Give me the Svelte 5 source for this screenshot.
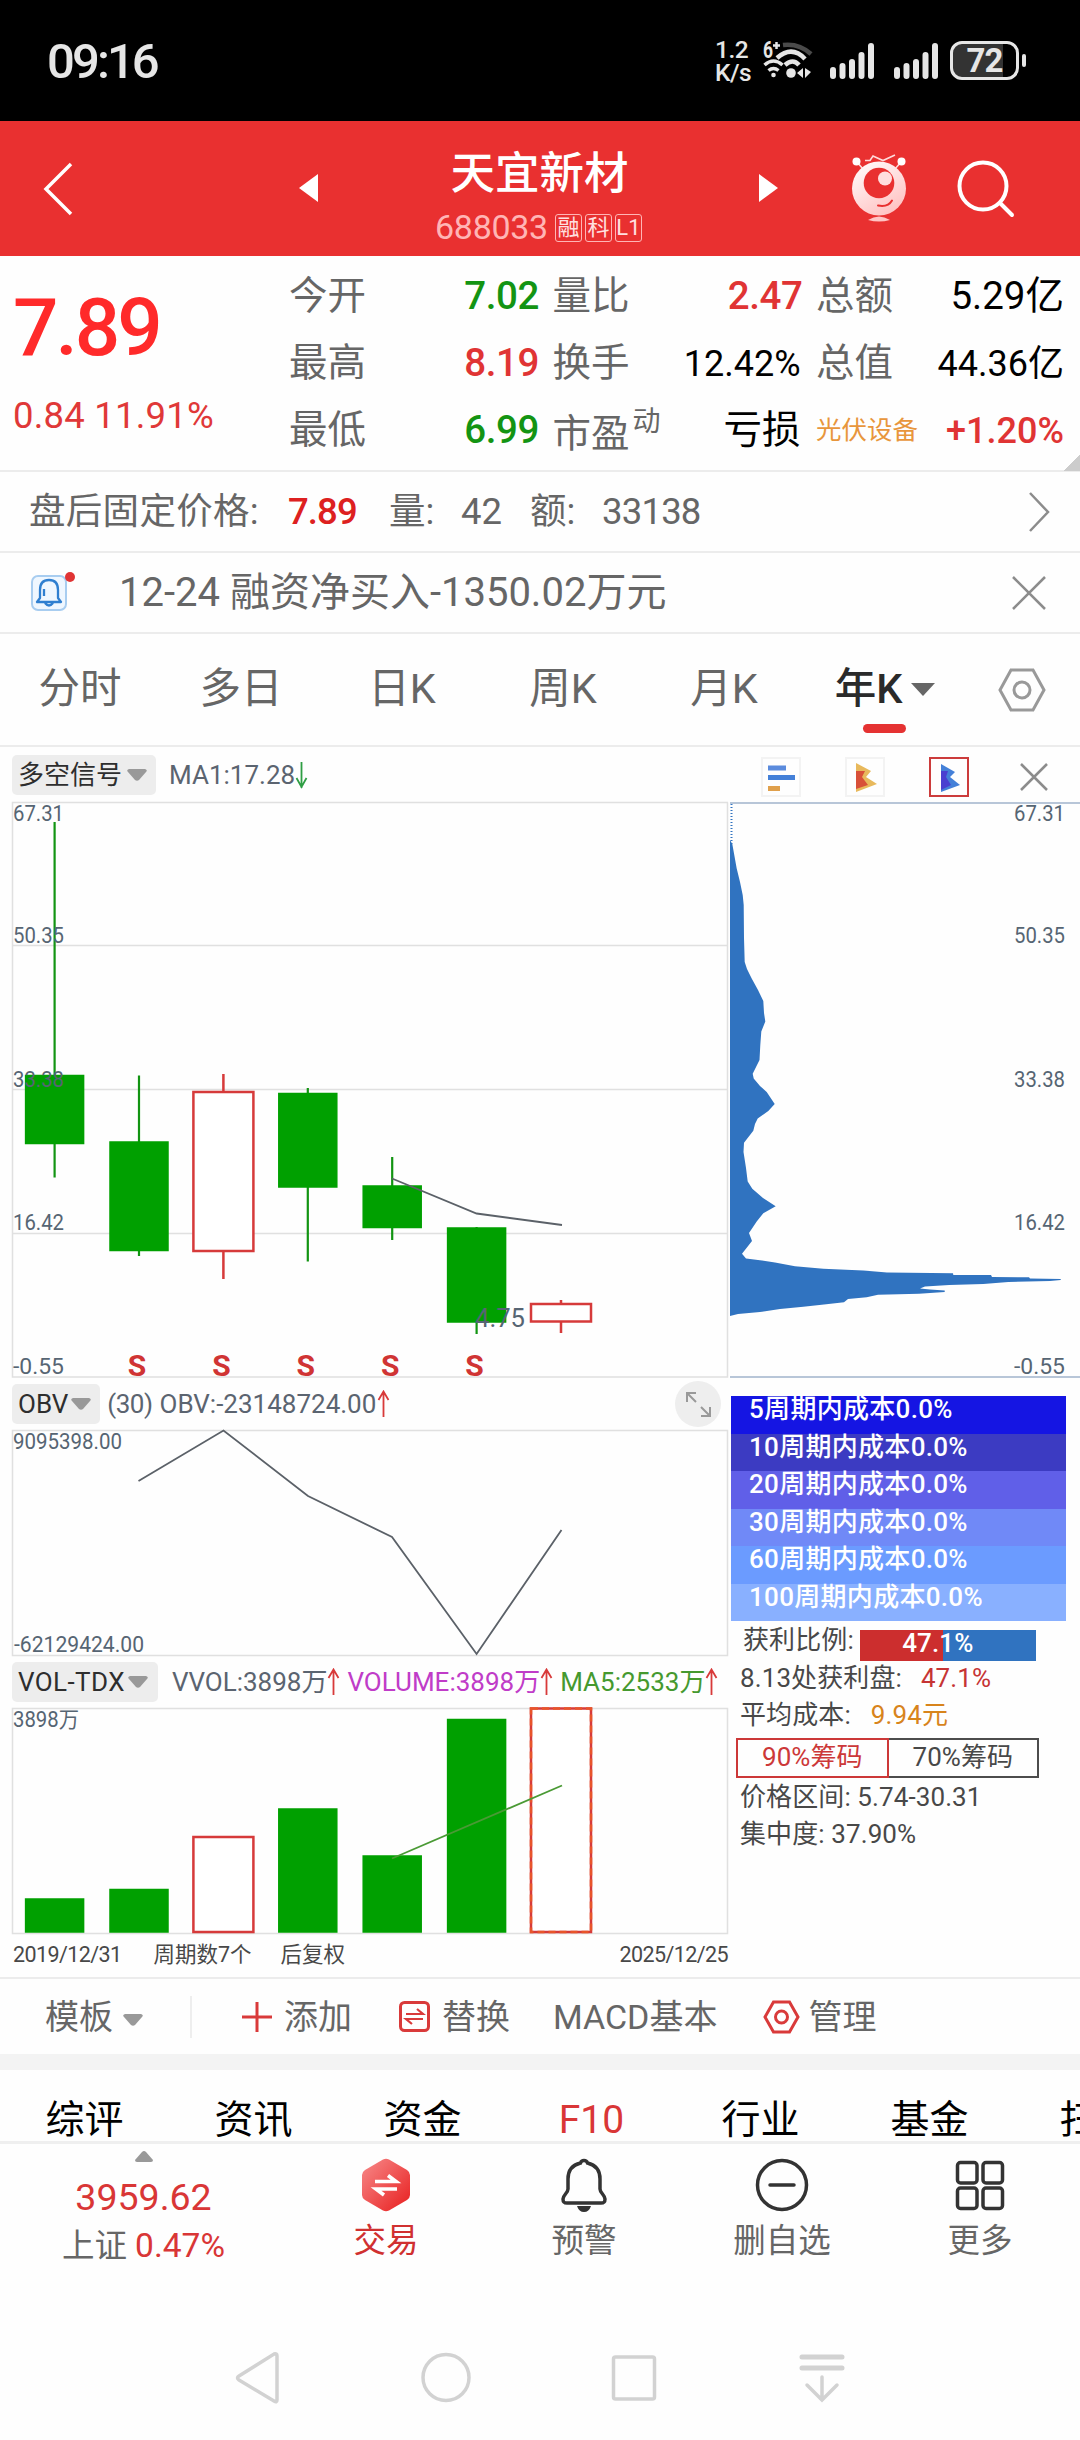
<script lang="ts">
  type Tone = "up" | "down" | "flat";

  const stats: { label: string; sup?: string; value: string; tone: Tone; small?: boolean; sector?: boolean }[][] = [
    [
      { label: "今开", value: "7.02", tone: "down" },
      { label: "最高", value: "8.19", tone: "up" },
      { label: "最低", value: "6.99", tone: "down" },
    ],
    [
      { label: "量比", value: "2.47", tone: "up" },
      { label: "换手", value: "12.42%", tone: "flat", small: true },
      { label: "市盈", sup: "动", value: "亏损", tone: "flat" },
    ],
    [
      { label: "总额", value: "5.29亿", tone: "flat" },
      { label: "总值", value: "44.36亿", tone: "flat", small: true },
      { label: "光伏设备", value: "+1.20%", tone: "up", small: true, sector: true },
    ],
  ];

  const periods = ["分时", "多日", "日K", "周K", "月K", "年K"];
  let period = $state("年K");

  // one slot per year, shared by the three charts
  const slot = (i: number) => 54.6 + i * 84.4;

  const candles = [
    { high: 822, top: 1075.5, bottom: 1143.5, low: 1177.5, up: false },
    { high: 1075.5, top: 1142, bottom: 1250.5, low: 1256, up: false },
    { high: 1074, top: 1092, bottom: 1251, low: 1279, up: true },
    { high: 1088, top: 1093.5, bottom: 1187, low: 1261.5, up: false },
    { high: 1157, top: 1186, bottom: 1227.5, low: 1240, up: false },
    { high: 1227, top: 1228, bottom: 1322, low: 1334, up: false },
    { high: 1300, top: 1304, bottom: 1321.5, low: 1333, up: true },
  ];
  const scale = [
    { text: "67.31", y: 821 },
    { text: "50.35", y: 942.5 },
    { text: "33.38", y: 1086.5 },
    { text: "16.42", y: 1230 },
    { text: "-0.55", y: 1373.5 },
  ];
  const volumes = [
    { y: 1899, up: false },
    { y: 1889.5, up: false },
    { y: 1837, up: true },
    { y: 1809, up: false },
    { y: 1856, up: false },
    { y: 1719.5, up: false },
    { y: 1708.5, up: true },
  ];

  const chips =
    "730,840 732.3,844 736.7,868.4 740,882 742.7,895 743.7,905 744,938 744.7,962 747,969 751.7,978.6 758,990 763.3,1001 764,1013 765.3,1021.4 761.3,1031.6 760.3,1045 759.5,1060 752.7,1073.7 753.7,1078.6 760,1086 766.7,1092 774.7,1104 768.3,1111 757.7,1118.6 755,1124 753.3,1130.8 744,1142.7 743.5,1152 746,1168 747.7,1181.4 752.3,1188.8 763,1198 775.7,1206.3 763.3,1213.3 756.7,1221.4 749,1233 752,1241 742,1253.7 746,1258.6 760,1260.2 775,1262.5 795,1266.3 823.3,1268.8 863.3,1270.4 887,1272.4 953,1273.3 953.3,1275 991,1275 992,1277 1029,1277.3 1030,1278.5 1060.7,1279 1060.7,1280 1050,1281 1008.3,1282 983.3,1284 949.3,1285 925,1286.5 920,1288.5 930,1289.5 944.7,1290.5 944.7,1292 919,1293.7 878,1294.8 866.7,1297.3 848,1299 844,1302.2 824,1304.5 803.3,1306.7 780,1309 760,1312 738,1314 730,1316";

  const costs = [
    { text: "5周期内成本0.0%", color: "#1515e3" },
    { text: "10周期内成本0.0%", color: "#3c3bc2" },
    { text: "20周期内成本0.0%", color: "#605fe8" },
    { text: "30周期内成本0.0%", color: "#7089f7" },
    { text: "60周期内成本0.0%", color: "#6b9bff" },
    { text: "100周期内成本0.0%", color: "#89b0ff" },
  ];

  const infoTabs = ["综评", "资讯", "资金", "F10", "行业", "基金", "扫雷"];
</script>

{#snippet trend(up: boolean)}
  <svg class="trend" class:up width="13" height="28" viewBox="0 0 13 28">
    {#if up}
      <path d="M6.5 27V1M1.5 10l5-8.500 5 8.500" />
    {:else}
      <path d="M6.500 1v26M1.500 17l5 9 5-9" />
    {/if}
  </svg>
{/snippet}

{#snippet caret()}
  <svg class="caret" width="20" height="12" viewBox="0 0 20 12"><path d="M2 0h16q3 1 1 3l-7 8q-2 1.500-4 0L1 3Q-1 1 2 0z" /></svg>
{/snippet}

{#snippet signal()}
  <svg class="signal" width="44" height="36" viewBox="0 0 44 36">
    <path d="M3 27v6M12.500 23v10M22 19v14M31.500 12v21M41 3v30" />
  </svg>
{/snippet}

<div class="screen">
  <div class="status">
    <span class="clock">09:16</span>
    <div class="speed"><span>1.2</span><span>K/s</span></div>
    <svg class="wifi" width="52" height="40" viewBox="0 0 52 40">
      <text x="0" y="18" textLength="10" lengthAdjust="spacingAndGlyphs">6</text>
      <path class="thin" d="M10 5.500h7M13.500 2v7" />
      <path class="off" d="M20 5q16-2 28 9" />
      <path d="M14 18q15-13 28 1" />
      <path d="M22 25q8-7 14 0" />
      <path class="mid" d="M1.500 25q9-8 18 0M5.500 30.500q5-4 10 0" />
      <circle cx="10.500" cy="35" r="2.300" />
      <circle cx="28" cy="33" r="4.800" />
      <path class="fill" d="M34 33l6-5v10zM42 28v10l6-6z" />
    </svg>
    {@render signal()}
    {@render signal()}
    <div class="battery"><span>72</span></div>
    <i class="battery-tip"></i>
  </div>

  <header>
    <svg class="back" width="32" height="56" viewBox="0 0 32 56"><path d="M29 3L4 28l25 25" /></svg>
    <svg class="prev" width="19" height="28" viewBox="0 0 19 28"><path d="M19 0v28L0 14z" /></svg>
    <div class="title">
      <h1>天宜新材</h1>
      <div class="code">
        <span>688033</span>
        <b>融</b><b>科</b><b>L1</b>
      </div>
    </div>
    <svg class="next" width="19" height="28" viewBox="0 0 19 28"><path d="M0 0v28l19-14z" /></svg>
    <svg class="mascot" width="56" height="70" viewBox="0 0 56 70">
      <defs>
        <linearGradient id="face" x1="0" y1="0" x2="0.600" y2="1">
          <stop offset="0" stop-color="#fff" />
          <stop offset="1" stop-color="#ffc4c4" />
        </linearGradient>
      </defs>
      <path class="wire" d="M6 9l6 7M50 9l-6 7M14 7.500h5l3-4.500 10 4.500L44 2" />
      <circle cx="5.500" cy="8.500" r="4" fill="#fff" />
      <circle cx="50.500" cy="8.500" r="4" fill="#fff" />
      <circle cx="28" cy="35.500" r="27" fill="url(#face)" />
      <circle cx="28" cy="30" r="15.300" fill="#e93030" />
      <circle cx="34" cy="25.500" r="7" fill="#ffdede" />
      <path class="smile" d="M27 52.500q10 2 14-5" />
      <path d="M17 67q11-7 22 0-11 3-22 0z" fill="#ffc4c4" />
    </svg>
    <svg class="search" width="58" height="58" viewBox="0 0 58 58">
      <circle cx="26" cy="26" r="23.500" />
      <path d="M43 43l12 12" />
    </svg>
  </header>

  <section class="quote">
    <div class="last">
      <strong>7.89</strong>
      <span>0.84 11.91%</span>
    </div>
    {#each stats as column}
      <dl>
        {#each column as item}
          <div>
            <dt class:sector={item.sector}>{item.label}{#if item.sup}<sup>{item.sup}</sup>{/if}</dt>
            <dd class={item.tone} class:small={item.small}>{item.value}</dd>
          </div>
        {/each}
      </dl>
    {/each}
    <i class="fold"></i>
  </section>

  <div class="after">
    <span>盘后固定价格:</span>
    <span class="price">7.89</span>
    <span>量:</span>
    <span class="lots">42</span>
    <span>额:</span>
    <span class="amount">33138</span>
    <svg width="24" height="42" viewBox="0 0 24 42"><path d="M3 2l18 19L3 40" /></svg>
  </div>

  <div class="notice">
    <svg width="46" height="42" viewBox="0 0 46 42">
      <rect x="1" y="7" width="34" height="34" rx="6" fill="#eff7ff" stroke="#a8cdf0" stroke-width="2" />
      <path d="M18 11c-6 0-9 4-9 10v8l-3 4h24l-3-4v-8c0-6-3-10-9-10zM14 34q4 5 8 0M13 20v7" fill="none" stroke="#2f7fd0" stroke-width="2.300" stroke-linejoin="round" />
      <circle cx="39" cy="8" r="5" fill="#e03434" />
    </svg>
    <p>12-24 融资净买入-1350.02万元</p>
    <svg class="close" width="36" height="36" viewBox="0 0 36 36"><path d="M2 2l32 32M34 2L2 34" /></svg>
  </div>

  <nav class="periods">
    {#each periods as name}
      <button class:active={period === name} onclick={() => (period = name)}>
        {name}{#if name === "年K"}<svg width="24" height="13" viewBox="0 0 24 13"><path d="M0 0h24L12 13z" /></svg>{/if}
      </button>
    {/each}
    <svg class="hex" width="50" height="44" viewBox="0 0 50 44">
      <path d="M14 2h22l11 20-11 20H14L3 22z" />
      <circle cx="25" cy="22" r="8" />
    </svg>
  </nav>

  <div class="indicator main">
    <span class="pick">多空信号{@render caret()}</span>
    <span class="ma">MA1:17.28</span>{@render trend(false)}
    <div class="tools">
      <svg width="40" height="40" viewBox="0 0 40 40">
        <path d="M7 8.500h18v5H7z" fill="#5b8bdd" /><path d="M7 18h27v5H7z" fill="#4480d8" /><path d="M7 29h12v5H7z" fill="#e0a04c" />
      </svg>
      <svg width="40" height="40" viewBox="0 0 40 40">
        <path d="M11 6l15 8-5 6 11 7-21 8z" fill="#e8b95c" /><path d="M11 14h9l-3 6 6 8-12 4z" fill="#d85038" />
      </svg>
      <svg class="on" width="40" height="40" viewBox="0 0 40 40">
        <path d="M12 7l14 8-5 5 10 8-19 7z" fill="#4480d8" /><path d="M12 14h7l-2 6 5 8-10 5z" fill="#4a3fd0" />
      </svg>
    </div>
    <svg class="close" width="30" height="30" viewBox="0 0 30 30"><path d="M2 2l26 26M28 2L2 28" /></svg>
  </div>

  <div class="charts">
    <div class="left">
      <svg class="plot" width="728" height="576" viewBox="0 802 728 576">
        <path class="frame" d="M728 802.500H12.500v574.500H727.500V802.500M12 945.500h716M12 1089.500h716M12 1233.500h716" />
        {#each candles as c, i}
          <path class={c.up ? "rise" : "fall"} d="M{slot(i)} {c.high}V{c.top}M{slot(i)} {c.bottom}V{c.low}" />
          <rect class={c.up ? "rise" : "fall solid"} x={slot(i) - (c.up ? 30 : 29)} y={c.top} width={c.up ? 60 : 58} height={c.bottom - c.top} />
        {/each}
        {#each scale as s}
          <text x="13" y={s.y} textLength="51" lengthAdjust="spacingAndGlyphs">{s.text}</text>
        {/each}
        <path class="line" d="M392 1178.500L476.600 1213.500 562 1225" />
        <text class="low" x="475" y="1327" textLength="50" lengthAdjust="spacingAndGlyphs">4.75</text>
        {#each [1, 2, 3, 4, 5] as i}
          <text class="sell" x={slot(i) - 2} y="1375.500">S</text>
        {/each}
      </svg>

      <div class="indicator">
        <span class="pick">OBV{@render caret()}</span>
        <span class="args">(30)</span>
        <span class="obv">OBV:-23148724.00</span>{@render trend(true)}
        <svg class="expand" width="46" height="46" viewBox="0 0 46 46">
          <circle cx="23" cy="23" r="23" />
          <path d="M12 21v-9h9M12 12l9 9M35 26v9h-9M35 35l-9-9" />
        </svg>
      </div>
      <svg class="plot" width="728" height="226" viewBox="0 1430 728 226">
        <path class="frame" d="M12.500 1430.500H727.500V1655.500H12.500z" />
        <text x="13" y="1449" textLength="109" lengthAdjust="spacingAndGlyphs">9095398.00</text>
        <text x="14" y="1652" textLength="130" lengthAdjust="spacingAndGlyphs">-62129424.00</text>
        <path class="line" d="M138.500 1481L223.500 1430.500 308 1496 392 1537 476.600 1654 561.500 1530" />
      </svg>

      <div class="indicator">
        <span class="pick vol">VOL-TDX{@render caret()}</span>
        <span class="vvol">VVOL:3898万</span>{@render trend(true)}
        <span class="volume">VOLUME:3898万</span>{@render trend(true)}
        <span class="ma5">MA5:2533万</span>{@render trend(true)}
      </div>
      <svg class="plot" width="728" height="226" viewBox="0 1708 728 226">
        <path class="frame" d="M12.500 1708.500H727.500V1933.500H12.500z" />
        {#each volumes as v, i}
          <rect class={v.up ? "rise" : "fall solid"} x={slot(i) - (v.up ? 30 : 29)} y={v.y} width={v.up ? 60 : 58} height={1932 - v.y} />
        {/each}
        <rect class="live" x={slot(6) - 30} y="1708.500" width="60" height="223.500" />
        <path class="line avg" d="M392 1858.500L562 1785.500" />
        <text x="13" y="1727" textLength="66" lengthAdjust="spacingAndGlyphs">3898万</text>
      </svg>
      <div class="dates">
        <span class="day">2019/12/31</span>
        <span>周期数7个</span>
        <span>后复权</span>
        <span class="day">2025/12/25</span>
      </div>
    </div>

    <div class="right">
      <svg class="plot" width="352" height="576" viewBox="728 802 352 576">
        <path class="edge" d="M730 803H1080M730 1377H1080" />
        <path class="dots" d="M731.500 804v40" />
        <polygon points={chips} />
        {#each scale as s}
          <text x="1014" y={s.y} textLength="51" lengthAdjust="spacingAndGlyphs">{s.text}</text>
        {/each}
      </svg>
      <ul>
        {#each costs as c}
          <li style:background={c.color}>{c.text}</li>
        {/each}
      </ul>
      <p class="ratio">获利比例:<span>47.1%</span></p>
      <p>8.13处获利盘:<em>47.1%</em></p>
      <p>平均成本:<em class="avg">9.94元</em></p>
      <div class="range"><span class="on">90%筹码</span><span>70%筹码</span></div>
      <p>价格区间: 5.74-30.31</p>
      <p>集中度: 37.90%</p>
    </div>
  </div>

  <div class="toolbar">
    <span class="tpl">模板{@render caret()}</span>
    <span class="add">
      <svg width="30" height="30" viewBox="0 0 30 30"><path d="M15 0v30M0 15h30" /></svg>添加
    </span>
    <span class="swap">
      <svg width="31" height="31" viewBox="0 0 31 31">
        <rect x="1.500" y="1.500" width="28" height="28" rx="4" />
        <path d="M7 13h17l-6-5M24 18H7l6 5" />
      </svg>替换
    </span>
    <span class="macd">MACD基本</span>
    <span class="manage">
      <svg width="37" height="34" viewBox="0 0 37 34"><path d="M10.500 2h16l8.500 15-8.500 15h-16L2 17z" /><circle cx="18.500" cy="17" r="6" /></svg>管理
    </span>
  </div>

  <nav class="info">
    {#each infoTabs as name}
      <span class:hot={name === "F10"}>{name}</span>
    {/each}
  </nav>

  <footer>
    <div class="index">
      <svg width="18" height="11" viewBox="0 0 18 11"><path d="M9 0q1 0 2 1l7 8q0 2-2 2H2q-2 0-2-2l7-8q1-1 2-1z" /></svg>
      <strong>3959.62</strong>
      <span>上证 <b>0.47%</b></span>
    </div>
    <div class="act trade">
      <svg width="54" height="54" viewBox="0 0 54 54">
        <defs>
          <linearGradient id="hexfill" x1="0" y1="0" x2="1" y2="1">
            <stop offset="0" stop-color="#f78a8a" />
            <stop offset="1" stop-color="#e81e1e" />
          </linearGradient>
        </defs>
        <path d="M24 1.500q3-1.500 6 0l18 10.500q3 2 3 5v20q0 3-3 5L30 52.500q-3 1.500-6 0L6 42q-3-2-3-5V17q0-3 3-5z" fill="url(#hexfill)" />
        <path d="M16 23.500h21l-8-6M38 31H17l8 6" fill="none" stroke="#fff" stroke-width="3.600" />
      </svg>
      <span>交易</span>
    </div>
    <div class="act">
      <svg width="54" height="54" viewBox="0 0 54 54">
        <path d="M27 2.500c-2 0-3 1-3.500 2.500C15 7 11 13 11 21v10c0 4-5 6-5 10 0 3 1 4 4 4h34c3 0 4-1 4-4 0-4-5-6-5-10V21c0-8-4-14-12.500-16-.500-1.500-1.500-2.500-3.500-2.500z" />
        <path class="fill" d="M20 48h14q-2 6-7 6t-7-6z" />
      </svg>
      <span>预警</span>
    </div>
    <div class="act">
      <svg width="54" height="54" viewBox="0 0 54 54"><circle cx="27" cy="27" r="24.500" /><path d="M15 27h24" stroke-linecap="round" /></svg>
      <span>删自选</span>
    </div>
    <div class="act">
      <svg width="54" height="54" viewBox="0 0 54 54">
        <rect x="4.500" y="4.500" width="19.500" height="20.500" rx="3" /><rect x="30" y="4.500" width="19.500" height="20.500" rx="3" />
        <rect x="4.500" y="30" width="19.500" height="20.500" rx="3" /><rect x="30" y="30" width="19.500" height="20.500" rx="3" />
      </svg>
      <span>更多</span>
    </div>
  </footer>

  <div class="system">
    <svg width="50" height="54" viewBox="0 0 50 54"><path d="M44 5v44q0 3-3 1L6 29q-3-2 0-4L41 3q3-1 3 2z" /></svg>
    <svg width="50" height="54" viewBox="0 0 50 54"><circle cx="25" cy="26.500" r="23" /></svg>
    <svg width="50" height="54" viewBox="0 0 50 54"><rect x="4.500" y="6" width="41" height="42" rx="2" /></svg>
    <svg width="50" height="54" viewBox="0 0 50 54"><path class="bars" d="M5 6h40M5 17h40" /><path d="M25 26v23M10 34l15 15 15-15" /></svg>
  </div>
</div>

<style>
  :global(body) {
    background: #fefefe;
  }
  .screen {
    width: 1080px;
    height: 2440px;
    overflow: hidden;
    background: #fefefe;
    color: #666;
    font-family: Roboto, "Noto Sans CJK SC", sans-serif;
    line-height: 1;
    white-space: nowrap;
  }
  .screen * {
    box-sizing: border-box;
  }
  svg {
    display: block;
    flex: none;
  }
  p,
  h1,
  ul,
  dl,
  dd {
    margin: 0;
    padding: 0;
  }

  /* status bar */
  .status {
    display: flex;
    height: 121px;
    padding-left: 47px;
    background: #000;
    color: #e6e6e6;
  }
  .clock {
    width: 668px;
    padding-top: 37px;
    font-size: 49px;
    font-weight: 500;
    letter-spacing: -2.9px;
  }
  .speed {
    width: 48px;
    padding-top: 39px;
    font-size: 24.5px;
    line-height: 22.5px;
  }
  .speed span {
    display: block;
    font-weight: 500;
    letter-spacing: -0.5px;
  }
  .wifi {
    margin: 40px 15px 0 0;
    overflow: visible;
    fill: #e6e6e6;
  }
  .wifi text {
    font-size: 23px;
    font-weight: 700;
  }
  .wifi path {
    fill: none;
    stroke: #e6e6e6;
    stroke-width: 4.5;
  }
  .wifi .thin {
    stroke-width: 2.5;
  }
  .wifi .mid {
    stroke-width: 3.5;
  }
  .wifi .off {
    stroke: #4a4a4a;
  }
  .wifi .fill {
    fill: #e6e6e6;
    stroke: none;
  }
  .signal {
    margin: 43px 20px 0 0;
    fill: none;
    stroke: #e6e6e6;
    stroke-width: 6;
    stroke-linecap: round;
  }
  .battery {
    width: 69px;
    height: 39px;
    margin: 41px 3px 0 -8px;
    border: 3px solid #e6e6e6;
    border-radius: 12px;
    background: linear-gradient(90deg, #333 80%, #000 80%);
    font-size: 33px;
    font-weight: 700;
    line-height: 34px;
    text-align: center;
    letter-spacing: -1px;
  }
  .battery-tip {
    width: 4px;
    height: 13px;
    margin-top: 54px;
    border-radius: 2px;
    background: #e6e6e6;
  }

  /* header */
  header {
    display: flex;
    height: 135px;
    background: #e93030;
    color: #fff;
  }
  .back,
  .search {
    fill: none;
    stroke: #fff;
    stroke-width: 3.5;
  }
  .back {
    margin: 40px 0 0 42px;
  }
  .prev,
  .next {
    margin-top: 53px;
    fill: #fff;
  }
  .prev {
    margin-left: 225px;
  }
  .title {
    width: 441px;
    text-align: center;
  }
  h1 {
    margin-top: 28px;
    padding-left: 2px;
    font-size: 44.5px;
    font-weight: 500;
    line-height: 50px;
  }
  .code {
    display: flex;
    justify-content: center;
    margin-top: 12px;
    gap: 3px;
    font-size: 34px;
    line-height: 32px;
    color: #ffb5b5;
  }
  .code span {
    margin-right: 4px;
    letter-spacing: -0.3px;
  }
  .code b {
    width: 27px;
    height: 28px;
    margin-top: 3px;
    border: 1.5px solid #ffb5b5;
    border-radius: 3px;
    color: #ffe0e0;
    font-size: 22px;
    font-weight: 400;
    line-height: 25px;
    display: flex;
    justify-content: center;
  }
  .mascot {
    margin: 32px 0 0 73px;
  }
  .wire {
    fill: none;
    stroke: #ffdada;
    stroke-width: 1.6;
  }
  .smile {
    fill: none;
    stroke: #e93030;
    stroke-width: 2;
    stroke-linecap: round;
  }
  .search {
    margin: 39px 0 0 50px;
    stroke-width: 4;
    stroke-linecap: round;
  }

  /* quote */
  .quote {
    position: relative;
    display: flex;
    height: 216px;
    border-bottom: 2px solid #ececec;
  }
  .last {
    width: 289px;
    padding-left: 13px;
    color: #e03838;
  }
  .last strong {
    display: block;
    margin-top: 32px;
    color: #ff2a2a;
    font-size: 80px;
    font-weight: 500;
    line-height: 80px;
    letter-spacing: -3px;
  }
  .last span {
    display: block;
    margin-top: 28px;
    font-size: 36.5px;
    line-height: 40px;
    letter-spacing: 0.2px;
  }
  dl {
    width: 248px;
    margin-right: 15.5px;
    padding-top: 7px;
  }
  dl div {
    display: flex;
    align-items: center;
    justify-content: space-between;
    height: 67px;
  }
  dt {
    font-size: 38.5px;
  }
  dt sup {
    display: inline-block;
    margin-left: 3px;
    font-size: 28px;
    line-height: 1;
    vertical-align: 16px;
  }
  dt.sector {
    color: #e8963c;
    font-size: 25.5px;
  }
  dd {
    font-size: 38.5px;
    font-weight: 500;
    color: #000;
  }
  dd.small {
    font-size: 36px;
  }
  dd.up:not(.small),
  dd.down {
    margin-right: -2px;
    letter-spacing: -0.4px;
  }
  dd.up {
    color: #e03434;
  }
  dd.down {
    color: #139413;
  }
  dd.flat {
    font-weight: 400;
  }
  .fold {
    position: absolute;
    right: 0;
    bottom: -1px;
    width: 17px;
    height: 17px;
    background: linear-gradient(135deg, transparent 50%, #ccc 50%);
  }

  .after,
  .notice {
    display: flex;
    align-items: center;
    height: 81px;
    border-bottom: 2px solid #ececec;
    font-size: 36.5px;
    line-height: 50px;
  }
  .after {
    padding-left: 29px;
  }
  .after span {
    width: 101px;
  }
  .after span:first-child {
    width: 259px;
    letter-spacing: 0.3px;
  }
  .after .price {
    color: #dd2020;
    font-weight: 500;
    letter-spacing: -0.9px;
  }
  .after span:nth-child(3),
  .after span:nth-child(5) {
    width: 72px;
  }
  .after .lots {
    width: 69px;
  }
  .after .amount {
    width: 425px;
    letter-spacing: -0.8px;
  }
  .after svg {
    fill: none;
    stroke: #8c8c8c;
    stroke-width: 2.5;
  }
  .notice {
    padding-left: 31px;
  }
  .notice svg:first-child {
    margin-top: -6px;
  }
  .notice p {
    width: 934px;
    padding-left: 42px;
    font-size: 40px;
  }
  .close {
    fill: none;
    stroke: #8c8c8c;
    stroke-width: 2.5;
  }

  .periods {
    display: flex;
    align-items: center;
    height: 113px;
    border-bottom: 2px solid #ececec;
  }
  .periods button {
    position: relative;
    display: flex;
    align-items: center;
    justify-content: center;
    width: 161px;
    height: 111px;
    padding: 0 1px 1px 0;
    border: 0;
    background: none;
    color: #666;
    font: 400 41.5px/1 Roboto, "Noto Sans CJK SC", sans-serif;
  }
  .periods .active {
    color: #2a2a2a;
    font-weight: 500;
  }
  .active::after {
    content: "";
    position: absolute;
    left: 58px;
    bottom: 12px;
    width: 43px;
    height: 9px;
    border-radius: 5px;
    background: #e53232;
  }
  .periods button svg {
    margin-left: 9px;
    fill: #666;
  }
  .hex {
    margin-left: 31px;
    fill: none;
    stroke: #999;
    stroke-width: 3;
  }

  /* charts */
  .indicator {
    display: flex;
    align-items: center;
    height: 52px;
    padding-left: 12px;
    color: #5b6470;
    font-size: 26px;
    line-height: 36px;
  }
  .indicator.main {
    height: 55px;
  }
  .pick {
    display: flex;
    align-items: center;
    height: 40px;
    padding: 0 9px 0 6px;
    border-radius: 5px;
    background: #ededed;
    color: #2e2e2e;
  }
  .pick.vol {
    padding-right: 10px;
    letter-spacing: 0.4px;
  }
  .caret {
    margin-left: 3px;
    fill: #999;
  }
  .main .caret {
    margin-left: 5px;
  }
  .trend {
    margin-right: 7px;
    fill: none;
    stroke: #2f9e44;
    stroke-width: 1.8;
  }
  .trend.up {
    stroke: #d83a3a;
  }
  .ma {
    margin-left: 13px;
  }
  .args {
    margin: 0 7px;
    letter-spacing: -0.5px;
  }
  .obv {
    margin-right: 1px;
  }
  .vvol {
    margin-left: 14px;
  }
  .volume {
    color: #c03cc8;
  }
  .ma5 {
    color: #45992f;
  }
  .tools {
    display: flex;
    margin: 4px 0 0 auto;
    gap: 44px;
  }
  .tools svg {
    outline: 2px solid #f3f3f3;
    outline-offset: -2px;
  }
  .tools .on {
    outline-color: #cc3c3c;
  }
  .main .close {
    margin: 4px 31px 0 50px;
  }
  .expand {
    margin-left: auto;
    margin-right: 7px;
    fill: none;
    stroke: #999;
    stroke-width: 2;
  }
  .expand circle {
    fill: #eee;
    stroke: none;
  }
  .charts {
    display: flex;
    height: 1175px;
  }
  .left {
    width: 728px;
  }
  .plot {
    overflow: visible;
  }
  .plot text {
    fill: #566573;
    font-size: 22px;
  }
  .frame {
    fill: none;
    stroke: #e0e0e0;
    stroke-width: 1.5;
  }
  .rise {
    fill: #fff;
    stroke: #d63a3a;
    stroke-width: 2.5;
  }
  .fall {
    fill: #00a000;
    stroke: #129412;
    stroke-width: 2.2;
  }
  .solid {
    stroke: #00a000;
    stroke-width: 1.5;
  }
  .live {
    fill: none;
    stroke: #e8552a;
    stroke-width: 2.5;
    stroke-dasharray: 7 4;
  }
  .line {
    fill: none;
    stroke: #5b6168;
    stroke-width: 1.8;
  }
  .line.avg {
    stroke: #4a9a35;
  }
  .plot .low {
    font-size: 26px;
  }
  .plot .sell {
    fill: #d03434;
    font-size: 30px;
    font-weight: 700;
    text-anchor: middle;
  }
  .edge {
    stroke: #b8c6d8;
    stroke-width: 2;
  }
  .dots {
    stroke: #3073c0;
    stroke-width: 2;
    stroke-dasharray: 1 2;
  }
  polygon {
    fill: #3073c0;
  }
  .dates {
    display: flex;
    align-items: center;
    height: 42px;
    padding: 0 0 0 13px;
    color: #484848;
    font-size: 21.5px;
    line-height: 30px;
  }
  .dates .day {
    letter-spacing: -0.6px;
  }
  .dates span:nth-child(2) {
    margin: 0 29px 0 32px;
  }
  .dates span:last-child {
    margin-left: auto;
  }

  .right ul {
    width: 335px;
    height: 225px;
    margin: 18px 0 0 3px;
    list-style: none;
  }
  .right li {
    height: 37.5px;
    padding-left: 18px;
    color: #fff;
    font-size: 26px;
    font-weight: 500;
    line-height: 26px;
    letter-spacing: 0.3px;
  }
  .right p {
    height: 37.5px;
    padding-left: 12px;
    color: #484848;
    font-size: 26px;
    line-height: 38px;
    letter-spacing: 0.1px;
  }
  .right .ratio {
    display: flex;
    padding-left: 15px;
  }
  .ratio span {
    width: 176px;
    height: 31px;
    margin: 9px 0 0 6px;
    padding-right: 20px;
    background: linear-gradient(90deg, #cc2e2e 47.1%, #3073c0 47.1%);
    color: #fff;
    font-weight: 500;
    line-height: 27px;
    text-align: center;
  }
  .right em {
    margin-left: 19px;
    color: #c63434;
    font-style: normal;
  }
  .right em.avg {
    margin-left: 20px;
    color: #d8841c;
  }
  .range {
    display: flex;
    width: 303px;
    height: 40px;
    margin: 4px 0 0 8px;
    font-size: 26px;
    line-height: 34px;
    text-align: center;
    color: #484848;
  }
  .range span {
    flex: 1;
    border: 2px solid #4c4c4c;
    border-left: 0;
  }
  .range .on {
    border: 2px solid #cc3838;
    color: #cc3838;
  }

  /* toolbar */
  .toolbar {
    display: flex;
    align-items: center;
    height: 77px;
    padding-left: 45px;
    border-top: 2px solid #ececec;
    font-size: 34px;
  }
  .toolbar span {
    display: flex;
    align-items: center;
  }
  .toolbar svg:not(:global(.caret)) {
    fill: none;
    stroke: #d93a3a;
    stroke-width: 3;
  }
  .tpl {
    width: 147px;
    height: 42px;
    border-right: 2px solid #eee;
  }
  .tpl :global(.caret) {
    margin: 7px 0 0 10px;
  }
  .add {
    margin-left: 50px;
    gap: 12px;
  }
  .swap {
    margin-left: 47px;
    gap: 12px;
  }
  .swap path {
    stroke-width: 2.2;
  }
  .macd {
    margin-left: 43px;
  }
  .manage {
    margin-left: 46px;
    gap: 8px;
  }
  .info {
    display: flex;
    align-items: center;
    height: 90px;
    padding-top: 29px;
    border-top: 16px solid #f3f3f3;
    border-bottom: 3px solid #efefef;
    overflow: hidden;
    color: #000;
    font-size: 39px;
  }
  .info span {
    flex: none;
    width: 169px;
    text-align: center;
  }
  .info .hot {
    color: #d93636;
  }

  footer {
    display: flex;
    height: 180px;
    color: #666;
    font-size: 32.5px;
  }
  .index {
    width: 287px;
    text-align: center;
    color: #d93636;
  }
  .index svg {
    margin: 7px auto 0;
    fill: #999;
  }
  .index strong {
    display: block;
    margin-top: 16px;
    font-size: 37.5px;
    font-weight: 400;
    line-height: 38px;
  }
  .index span {
    display: block;
    margin-top: 10px;
    color: #666;
    line-height: 40px;
  }
  .index b {
    color: #d93636;
    font-weight: 400;
    font-size: 33.5px;
  }
  .act {
    width: 198px;
    padding-top: 14px;
  }
  .act svg {
    margin: 0 auto 10px;
    fill: none;
    stroke: #333;
    stroke-width: 3.5;
  }
  .trade svg {
    stroke: none;
  }
  .act .fill {
    fill: #333;
    stroke: none;
  }
  .act span {
    display: block;
    line-height: 38px;
    text-align: center;
  }
  .trade span {
    color: #d03030;
  }

  .system {
    display: flex;
    gap: 138px;
    padding: 27px 0 0 233px;
  }
  .system svg {
    fill: none;
    stroke: #d2d2d2;
    stroke-width: 3.5;
    stroke-linecap: round;
  }
  .system .bars {
    stroke-width: 5;
  }
</style>
